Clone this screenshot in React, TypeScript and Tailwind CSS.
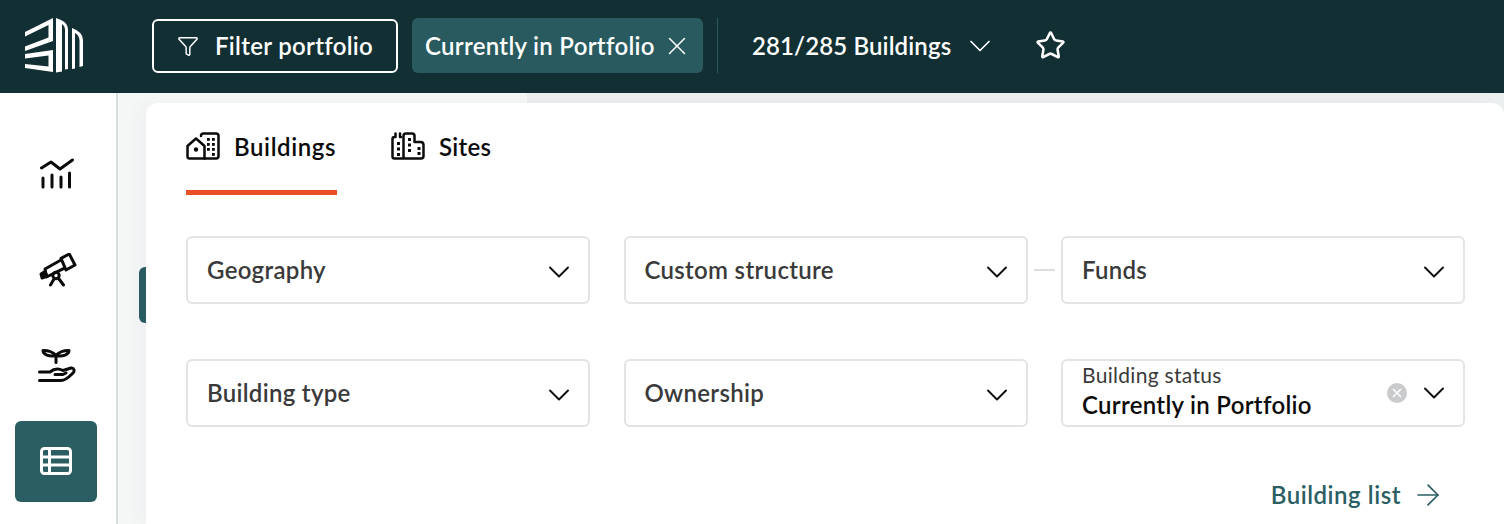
import { ChevronDown, X, Star, ArrowRight, Filter } from "lucide-react";

function Logo() {
  return (
    <svg width="60" height="56" viewBox="0 0 60 56" fill="#fff" className="block">
      <path d="M1 14 L29 0 V23 L1 33 V28.5 L24.5 19.5 V7 L1 18.5 Z" />
      <path d="M1 36 L29 32 V54 L1 50 V46 L24.5 48.5 V37.5 L1 40.5 Z" />
      <path d="M32 0 L37 2 Q44 5 44 12 V51 L41 51.5 V12 Q41 8 38 6 V53.5 L32 54.5 Z" />
      <path d="M48 10 Q59 14 59 22 V48 L55.5 49 V22 Q55 17 51 15 V50.5 L48 51 Z" />
    </svg>
  );
}

function ChartIcon() {
  return (
    <svg width="34" height="32" viewBox="0 0 34 32" fill="none" stroke="#0b0b0b" strokeWidth="3" strokeLinecap="round" strokeLinejoin="round">
      <path d="M1.5 10 L11 4 L20 11 L32.5 2" />
      <path d="M3 20 V29" />
      <path d="M12 17 V29" />
      <path d="M21 19 V29" />
      <path d="M29.5 15 V29" />
    </svg>
  );
}

function TelescopeIcon() {
  return (
    <svg width="38" height="34" viewBox="0 0 38 34" fill="none" stroke="#0b0b0b" strokeWidth="3" strokeLinecap="round" strokeLinejoin="round">
      <path d="M22 5.3 L30.3 1 L36 12 L27 17 Z" />
      <path d="M22 7 L6 16 L7.5 24 L25 15.3" />
      <path d="M2 21 L6 18.5 L8 23 L3 25 Z" fill="#0b0b0b" />
      <circle cx="17" cy="22.5" r="3.2" />
      <path d="M15 26 L11.5 32" />
      <path d="M20 26 L24.5 32" />
    </svg>
  );
}

function PlantIcon() {
  return (
    <svg width="38" height="34" viewBox="0 0 38 34" fill="none" stroke="#0b0b0b" strokeWidth="3" strokeLinecap="round" strokeLinejoin="round">
      <path d="M18 6 V13.5" />
      <path d="M18 6.5 C14 1.5 9 1.5 5 1.5 C5 5.5 11 8 18 6.5 Z" />
      <path d="M18 6.5 C22 1.5 27 1.5 31 1.5 C31 5.5 25 8 18 6.5 Z" />
      <path d="M1.5 23 H12 C16 19.5 21 19.5 25 21.5 L33 19 C36 18.5 37 22 35 24 C32 27 28 31.5 23 31.5 H1.5" />
      <path d="M17 25.5 H25 L28 24" />
    </svg>
  );
}

function TableIcon() {
  return (
    <svg width="32" height="28" viewBox="0 0 32 28" fill="none" stroke="#fff" strokeWidth="3" strokeLinejoin="round">
      <rect x="1.5" y="1.5" width="29" height="25" rx="3" />
      <path d="M1.5 10 H30.5" />
      <path d="M1.5 18 H30.5" />
      <path d="M9.5 1.5 V26.5" />
    </svg>
  );
}

function BuildingsIcon() {
  return (
    <svg width="34" height="28" viewBox="0 0 34 28" fill="none" stroke="#0b0b0b" strokeWidth="2.5" strokeLinecap="round" strokeLinejoin="round">
      <path d="M1.5 14 L10 6.5 L18.5 14 V26.5 H3.5 Q1.5 26.5 1.5 24.5 Z" />
      <path d="M15 4 Q15 1.5 17.5 1.5 H30 Q32.5 1.5 32.5 4 V24 Q32.5 26.5 30 26.5 H18.5" />
      <circle cx="10" cy="17.5" r="2.2" fill="#0b0b0b" stroke="none" />
      <g fill="#0b0b0b" stroke="none">
        <rect x="21" y="6" width="2.8" height="2.8" />
        <rect x="26" y="6" width="2.8" height="2.8" />
        <rect x="21" y="11" width="2.8" height="2.8" />
        <rect x="26" y="11" width="2.8" height="2.8" />
        <rect x="21" y="16" width="2.8" height="2.8" />
        <rect x="26" y="16" width="2.8" height="2.8" />
        <rect x="26" y="21" width="2.8" height="2.8" />
      </g>
    </svg>
  );
}

function SitesIcon() {
  return (
    <svg width="34" height="28" viewBox="0 0 34 28" fill="none" stroke="#0b0b0b" strokeWidth="2.5" strokeLinecap="round" strokeLinejoin="round">
      <path d="M12 26.5 H3.5 Q1.5 26.5 1.5 24.5 V7 Q1.5 5 3.5 5 H4.5 V1.5 M9 5 V1.5 M9 5 H10" />
      <path d="M14 26.5 Q12.5 26.5 12.5 24.5 V4 Q12.5 1.5 15 1.5 H21 Q23.5 1.5 23.5 4 V10 H29.5 Q32.5 10 32.5 13 V24 Q32.5 26.5 30 26.5 Z" />
      <g fill="#0b0b0b" stroke="none">
        <rect x="6" y="10" width="3" height="3" />
        <rect x="6" y="15.5" width="3" height="3" />
        <rect x="6" y="21" width="3" height="3" />
        <rect x="17" y="6" width="3" height="3" />
        <rect x="17" y="11.5" width="3" height="3" />
        <rect x="17" y="17" width="3" height="3" />
        <rect x="26.5" y="15" width="3" height="3" />
        <rect x="26.5" y="20" width="3" height="3" />
      </g>
    </svg>
  );
}

function Select({ label }: { label: string }) {
  return (
    <div className="flex h-[68px] flex-1 items-center justify-between rounded-md border-2 border-[#e3e4e4] bg-white pl-[19px] pr-[11px]">
      <span className="text-[24px] font-semibold tracking-[0.3px] text-[#3a3a3a]">{label}</span>
      <ChevronDown size={36} strokeWidth={1.3} className="mt-[3px] text-[#111]" />
    </div>
  );
}

export default function App() {
  return (
    <div className="flex h-[524px] w-[1504px] flex-col overflow-hidden bg-white font-['Lato',sans-serif]">
      <header className="flex h-[93px] shrink-0 items-center bg-[#122f33] pb-[2px] text-white">
        <div className="ml-[24px] mr-[68px] w-[60px]">
          <Logo />
        </div>
        <button className="flex h-[54px] w-[246px] items-center rounded-md border-2 border-white pl-[23px] text-[24px] font-semibold tracking-[0.3px]">
          <Filter size={22} strokeWidth={1.6} />
          <span className="ml-[16px]">Filter portfolio</span>
        </button>
        <div className="ml-[14px] flex h-[55px] w-[291px] items-center rounded-md bg-[#285a5f] pl-[13px] text-[24px] font-semibold tracking-[0.3px]">
          Currently in Portfolio
          <X size={30} strokeWidth={1.2} className="ml-[7px]" />
        </div>
        <div className="ml-[14px] h-[55px] w-px bg-[#285a5f]" />
        <div className="ml-[34px] flex items-center text-[24px] font-semibold tracking-[0.12px]">
          281/285 Buildings
          <ChevronDown size={36} strokeWidth={1.1} className="ml-[11px]" />
        </div>
        <Star size={31} strokeWidth={2} className="ml-[37px]" />
      </header>

      <div className="flex flex-1">
        <aside className="flex w-[118px] shrink-0 flex-col items-center border-r-2 border-[#d5e0e0] pt-[65px]">
          <div className="flex h-[32px] w-full items-center justify-center pr-[3px]"><ChartIcon /></div>
          <div className="mt-[63px] flex h-[34px] w-full items-center justify-center pr-[1px]"><TelescopeIcon /></div>
          <div className="mt-[62px] flex h-[34px] w-full items-center justify-center pr-[2px]"><PlantIcon /></div>
          <div className="ml-[15px] mt-[38px] flex h-[81px] w-[82px] items-center justify-center self-start rounded-md bg-[#2a5e63] pb-[2px]"><TableIcon /></div>
        </aside>

        <main className="relative flex-1 bg-[linear-gradient(to_right,#f5f7f7_0,#f5f7f7_409px,#ebefef_409px)] pt-[10px]">
          <div className="absolute left-[21px] top-[174px] h-[56px] w-[20px] rounded-l-md bg-[#2a5e63]" />
          <div className="relative ml-[28px] h-full rounded-t-xl bg-white pl-[40px] pr-[39px] shadow-[-8px_0_16px_rgba(18,47,51,0.03)]">
            <div className="flex">
              <div className="flex h-[92px] w-[151px] items-start gap-[14px] border-b-[5px] border-[#ea4f25] pt-[29px]">
                <BuildingsIcon />
                <span className="text-[24px] font-semibold leading-[29px] tracking-[0.6px] text-[#0b0b0b]">Buildings</span>
              </div>
              <div className="ml-[54px] flex items-start gap-[14px] pt-[29px]">
                <SitesIcon />
                <span className="text-[24px] font-semibold leading-[29px] tracking-[0.3px] text-[#0b0b0b]">Sites</span>
              </div>
            </div>

            <div className="mt-[41px] grid grid-cols-[404px_404px_404px] gap-x-[33.5px] gap-y-[55px]">
              <Select label="Geography" />
              <div className="relative flex">
                <Select label="Custom structure" />
                <div className="absolute -right-[27px] top-[33px] h-[2px] w-[21px] bg-[#dcdddd]" />
              </div>
              <Select label="Funds" />
              <Select label="Building type" />
              <Select label="Ownership" />
              <div className="flex h-[68px] items-center justify-between rounded-md border-2 border-[#e3e4e4] bg-white pl-[19px] pr-[11px]">
                <div className="mb-[6px] flex flex-col">
                  <span className="text-[21px] leading-[30px] tracking-[0.3px] text-[#3a3a3a]">Building status</span>
                  <span className="text-[24px] font-semibold leading-[30px] tracking-[0.3px] text-[#0b0b0b]">Currently in Portfolio</span>
                </div>
                <div className="flex items-center gap-[9px]">
                  <span className="flex h-[20px] w-[20px] items-center justify-center rounded-full bg-[#c9cacb]">
                    <X size={14} strokeWidth={3} className="text-white" />
                  </span>
                  <ChevronDown size={36} strokeWidth={1.3} className="text-[#111]" />
                </div>
              </div>
            </div>

            <div className="mt-[51px] flex items-center justify-end pr-[20px] text-[24px] font-semibold leading-[32px] tracking-[0.55px] text-[#2a5e63]">
              Building list
              <ArrowRight size={34} strokeWidth={1.2} className="ml-[10px]" />
            </div>
          </div>
        </main>
      </div>
    </div>
  );
}
